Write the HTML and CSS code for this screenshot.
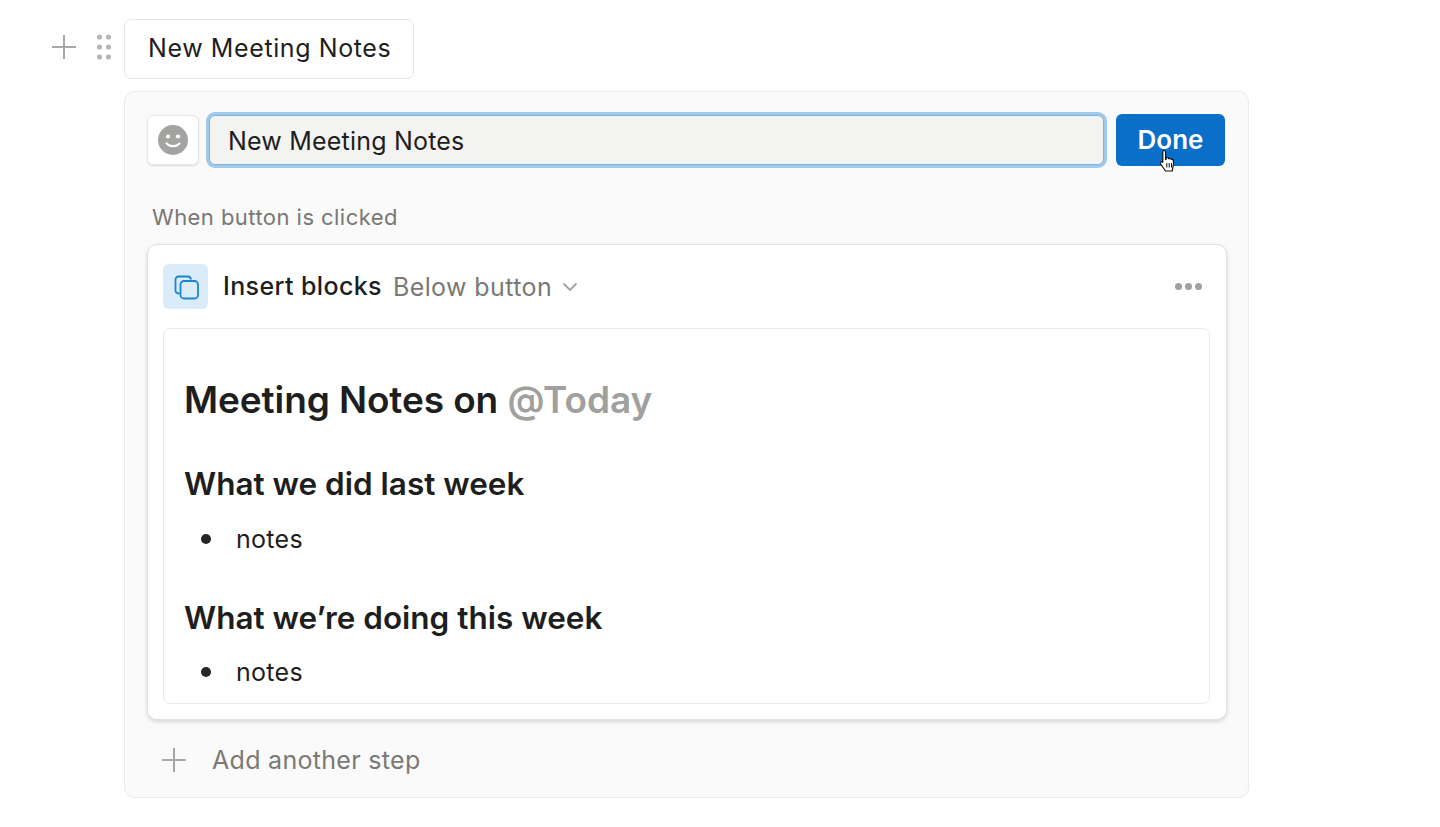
FILE: index.html
```html
<!DOCTYPE html>
<html lang="en">
<head>
<meta charset="utf-8">
<title>New Meeting Notes</title>
<link rel="stylesheet" href="styles.css">
</head>
<body>
<div class="page">
  <div class="top-row">
    <svg class="plus-icon top" viewBox="0 0 26 26"><path d="M13 1v24M1 13h24"/></svg>
    <svg class="grip-icon" viewBox="0 0 16 26"><circle cx="3.500" cy="3" r="2.600"/><circle cx="12.500" cy="3" r="2.600"/><circle cx="3.500" cy="13" r="2.600"/><circle cx="12.500" cy="13" r="2.600"/><circle cx="3.500" cy="23" r="2.600"/><circle cx="12.500" cy="23" r="2.600"/></svg>
    <div class="page-button">New Meeting Notes</div>
  </div>
  <div class="panel">
    <div class="name-row">
      <div class="emoji-box">
        <svg class="smile" viewBox="0 0 30 30"><circle cx="15" cy="15" r="15" fill="#a3a3a1"/><circle cx="10" cy="11.500" r="2.100" fill="#fff"/><circle cx="20" cy="11.500" r="2.100" fill="#fff"/><path d="M8.500 18.500c3.500 3.600 9.500 3.600 13 0" fill="none" stroke="#fff" stroke-width="2.200" stroke-linecap="round"/></svg>
      </div>
      <div class="name-input">New Meeting Notes</div>
      <div class="done-wrap">
        <div class="done">Done</div>
        <svg class="cursor" viewBox="0 0 18 24"><path d="M5 1.500c1 0 1.600.8 1.600 1.800v7.200l.6-.2V9c.9-.8 2-.6 2.400.3l.2.5c.8-.6 2-.3 2.300.6.9-.4 2-.1 2.200 1 .4 2 .3 4.400-.4 6.200L13.300 22H6.500L2 15.500c-.7-1-.8-2 0-2.500.7-.5 1.400-.2 1.800.3V3.300c0-1 .3-1.800 1.200-1.800z" fill="#fff" stroke="#111" stroke-width="1.200" stroke-linejoin="round"/><path d="M7.800 14v4.500M10.200 14v4.500M12.500 14v4.500" stroke="#111" stroke-width="1" fill="none"/></svg>
      </div>
    </div>
    <div class="section-label">When button is clicked</div>
    <div class="step-card">
      <div class="step-head">
        <div class="step-icon">
          <svg viewBox="0 0 26 26"><path d="M6.500 19.500h-1A3 3 0 0 1 2.500 16.500V5.500A3 3 0 0 1 5.500 2.500h9a3.500 3.500 0 0 1 3.500 3" fill="none" stroke="#1a84d0" stroke-width="1.800"/><rect x="7.500" y="7" width="17.500" height="17.500" rx="3.500" fill="none" stroke="#1a84d0" stroke-width="1.800"/></svg>
        </div>
        <span class="step-title">Insert blocks</span>
        <span class="step-target">Below button</span>
        <svg class="chevron" viewBox="0 0 16 10"><path d="M1.500 1.500L8 8l6.500-6.500"/></svg>
        <div class="more"><i></i><i></i><i></i></div>
      </div>
      <div class="content-box">
        <h1 class="title">Meeting Notes on <span class="mention">@Today</span></h1>
        <h2 class="subhead first">What we did last week</h2>
        <ul class="notes"><li>notes</li></ul>
        <h2 class="subhead second">What we’re doing this week</h2>
        <ul class="notes"><li>notes</li></ul>
      </div>
    </div>
    <div class="add-step">
      <svg class="plus-icon add" viewBox="0 0 26 26"><path d="M13 1v24M1 13h24"/></svg>
      <span>Add another step</span>
    </div>
  </div>
</div>
</body>
</html>
```
FILE: styles.css
```css
* { box-sizing: border-box; }
html, body { margin: 0; height: 100%; background: #fff; overflow: hidden; }
body { font-family: Inter, "Liberation Sans", sans-serif; color: #1e1e1e; }
.page { padding: 19px 0 0 51px; }
.top-row { display: flex; align-items: center; height: 60px; }
.plus-icon { width: 26px; height: 26px; fill: none; stroke: #a8a8a6; stroke-width: 2; }
.plus-icon.top { margin-bottom: 4px; }
.grip-icon { width: 16px; height: 26px; margin: 0 0 4px 19px; fill: #b5b5b3; }
.page-button { margin-left: 12px; width: 290px; height: 60px; display: flex; align-items: center; padding: 0 0 2px 23px; border: 1px solid #e6e6e4; border-radius: 7px; font-size: 25px; letter-spacing: .6px; }
.panel { width: 1125px; height: 707px; margin: 12px 0 0 73px; padding: 22px 23px 0 22px; background: #fafafa; border: 1px solid #ececec; border-radius: 10px; }
.name-row { display: flex; align-items: center; height: 52px; }
.emoji-box { width: 52px; height: 50px; display: flex; align-items: center; justify-content: center; background: #fff; border-radius: 6px; border: 1px solid #e8e8e6; box-shadow: 0 1px 2px rgba(0,0,0,.12); }
.smile { width: 30px; height: 30px; }
.name-input { width: 896px; height: 50px; margin-left: 10px; display: flex; align-items: center; padding: 2px 0 0 18px; background: #f3f3f1; border: 1px solid #7eb4dc; border-radius: 6px; box-shadow: 0 0 0 3px #9fcaea; font-size: 25px; letter-spacing: .2px; }
.done-wrap { position: relative; margin-left: 12px; }
.done { width: 109px; height: 52px; display: flex; align-items: center; justify-content: center; padding-bottom: 1px; background: #0a6fc9; border-radius: 6px; color: #fff; font-size: 26px; font-weight: 600; }
.cursor { position: absolute; left: 43px; top: 35px; width: 18px; height: 24px; }
.section-label { margin: 39px 0 0 5px; font-size: 22px; font-weight: 400; line-height: 24px; letter-spacing: .45px; color: #787774; }
.step-card { width: 1080px; height: 476px; margin-top: 15px; padding: 19px 16px 0 15px; background: #fff; border: 1px solid #e2e2e0; border-radius: 10px; box-shadow: 0 2px 4px rgba(0,0,0,.14); }
.step-head { display: flex; align-items: center; height: 45px; }
.step-icon { width: 45px; height: 45px; display: flex; align-items: center; justify-content: center; background: #daecf9; border-radius: 6px; }
.step-icon svg { width: 26px; height: 26px; }
.step-title { margin-left: 15px; padding-bottom: 2px; font-size: 25px; font-weight: 500; letter-spacing: .38px; }
.step-target { margin-left: 11px; font-size: 25px; letter-spacing: .4px; color: #7a7976; }
.chevron { width: 16px; height: 10px; margin-left: 10px; fill: none; stroke: #a2a2a0; stroke-width: 1.800; }
.more { display: flex; gap: 3px; margin-left: auto; margin-right: 8px; }
.more i { width: 7px; height: 7px; border-radius: 50%; background: #a0a09e; }
.content-box { height: 376px; margin-top: 19px; padding: 0 20px; border: 1px solid #e9e9e7; border-radius: 7px; overflow: hidden; }
.title { margin: 48px 0 0; font-size: 37px; line-height: 46px; font-weight: 600; letter-spacing: -.1px; }
.mention { color: #a0a09e; }
.subhead { margin: 0; font-size: 31.500px; line-height: 40px; font-weight: 600; }
.subhead.first { margin-top: 41px; }
.subhead.second { margin-top: 43px; }
.notes { margin: 19px 0 0; padding: 0 0 0 52px; list-style: none; font-size: 25px; line-height: 32px; letter-spacing: .3px; }
.subhead.second + .notes { margin-top: 18px; }
.notes li { position: relative; }
.notes li::before { content: ""; position: absolute; left: -35px; top: 11px; width: 10px; height: 10px; border-radius: 50%; background: #262624; }
.add-step { display: flex; align-items: center; height: 45px; margin-top: 17px; padding-left: 14px; font-size: 25px; letter-spacing: .3px; color: #7a7976; }
.plus-icon.add { margin-right: 25px; }
```
